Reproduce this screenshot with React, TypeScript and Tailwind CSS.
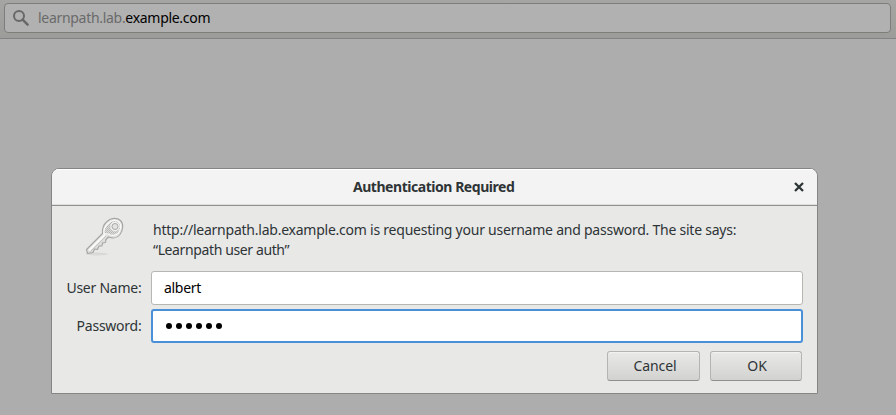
import React from 'react';

function SearchIcon() {
  return (
    <svg width="18" height="18" viewBox="0 0 18 18" fill="none" stroke="#686868" className="shrink-0">
      <circle cx="7" cy="7" r="5" strokeWidth="2" />
      <path d="M10.6 10.6 15.6 15.6" strokeWidth="2.5" strokeLinecap="round" />
    </svg>
  );
}

function KeyIcon() {
  return (
    <svg width="44" height="42" viewBox="0 0 44 42" className="shrink-0">
      <defs>
        <linearGradient id="metal" x1="0" y1="0" x2="1" y2="1">
          <stop offset="0" stopColor="#f1f1ef" />
          <stop offset="0.55" stopColor="#dddeda" />
          <stop offset="1" stopColor="#ebebe9" />
        </linearGradient>
        <pattern id="grip" width="2" height="2" patternUnits="userSpaceOnUse">
          <rect width="2" height="2" fill="#dcddd9" />
          <rect width="1" height="1" fill="#b5b6b2" />
          <rect x="1" y="1" width="1" height="1" fill="#bebfbb" />
        </pattern>
      </defs>
      <ellipse cx="14" cy="38" rx="11" ry="1.5" fill="#cfcfcc" opacity=".6" />
      <path
        d="M24 5.500C28 1.500 34 1.500 37.500 4.500C41 8 40 14.500 37 18.500C34 22.500 29 22.500 25.500 21L23 23.500L22.500 26.500L19.500 27L19 30L16 30L14.500 33.500L11.500 33L10 36.500L4.500 37.500L3.500 33.500L19.500 17.500C19 12.500 20.500 8.500 24 5.500Z"
        fill="url(#metal)" stroke="#a5a6a2" strokeWidth="1.100" strokeLinejoin="round"
      />
      <path d="M25 7.500C29 3.500 34 3.500 36.500 6.500C39 9.500 37.500 14.500 35 17.500C32 20 28 19.500 25 18L21 17.500C20.500 13.500 22 10.500 25 7.500Z" fill="url(#grip)" stroke="#fafaf8" strokeWidth="1.200" />
      <path d="M6 34.500 22 18.500" stroke="#fafaf8" strokeWidth="2" />
      <path d="M7.500 35.500 23 20" stroke="#c3c4c0" />
      <circle cx="32" cy="10.500" r="3.500" fill="#e7e8e7" stroke="#f2f2f0" strokeWidth="2.500" />
      <circle cx="32" cy="10.500" r="3" fill="#e3e4e2" stroke="#a7a8a5" />
    </svg>
  );
}

function DialogButton({ children, className }: { children: React.ReactNode; className: string }) {
  return (
    <button className={`h-[30px] rounded-[3px] border border-[#b4b5b0] border-b-[#8f908c] bg-linear-to-b from-[#e9e9e7] to-[#d2d2d0] leading-[28px] tracking-[-0.1px] shadow-[inset_0_1px_#f2f2f1] ${className}`}>
      {children}
    </button>
  );
}

export default function App() {
  return (
    <div className="h-[415px] w-[896px] overflow-hidden bg-[#adadad] font-['Noto_Sans',sans-serif] text-[14px] text-[#2e3436]">
      <header className="h-[39px] border-b border-[#838383] bg-linear-to-b from-[#a5a5a3] to-[#9c9c9a] pt-[3px] pl-1">
        <div className="flex h-[30px] w-[887px] items-center rounded-[4px] border border-[#7d7d7b] bg-[#b1b1b1] pl-[7px] leading-[28px] text-[#6a6a6a]">
          <SearchIcon />
          <span className="ml-2 whitespace-nowrap tracking-[-0.3px]">learnpath.lab.<span className="text-black">example.com</span></span>
        </div>
      </header>
      <section className="mt-[129px] ml-[51px] h-[226px] w-[767px] overflow-hidden rounded-t-[8px] border border-[#858684] bg-[#e8e8e7]">
        <div className="flex h-[37px] items-center border-b border-[#91928f] bg-[#f3f3f3] shadow-[inset_0_1px_white,inset_0_-1px_#dededd]">
          <h1 className="ml-[301px] w-[162px] pb-[2px] text-[14px] font-bold tracking-[-0.46px] whitespace-nowrap">Authentication Required</h1>
          <svg width="10" height="10" viewBox="0 0 10 10" className="ml-[279px]" stroke="#2e3436" strokeWidth="2.300"><path d="m1 1 8 8M9 1 1 9" /></svg>
        </div>
        <div className="flex h-[65px]">
          <div className="ml-[31px] w-[70px] pt-[10px]"><KeyIcon /></div>
          <p className="pt-[14px] leading-5 tracking-[-0.235px] whitespace-nowrap">http://learnpath.lab.example.com is requesting your username and password. The site says:<br /><span className="tracking-[-0.38px]">“Learnpath user auth”</span></p>
        </div>
        <form className="grid grid-cols-[89.500px_652px] gap-x-[9.500px] gap-y-1">
          <label className="text-right leading-[34px] tracking-[-0.24px]">User Name:</label>
          <div className="h-[34px] rounded-[3px] border border-[#b6b6b3] bg-white pl-3 leading-[32px] tracking-[-0.3px] text-black">albert</div>
          <label className="text-right leading-[34px] tracking-[-0.24px]">Password:</label>
          <div className="flex h-[34px] items-center gap-1 rounded-[3px] border-2 border-[#4a90d9] bg-white pl-[13px]">
            {Array.from({ length: 6 }, (_, i) => <span key={i} className="size-[6px] rounded-full bg-black" />)}
          </div>
        </form>
        <div className="mt-2 ml-[555px] flex gap-[10px]">
          <DialogButton className="w-[93px] pl-[3px]">Cancel</DialogButton>
          <DialogButton className="w-[92px] pl-[2px]">OK</DialogButton>
        </div>
      </section>
    </div>
  );
}
